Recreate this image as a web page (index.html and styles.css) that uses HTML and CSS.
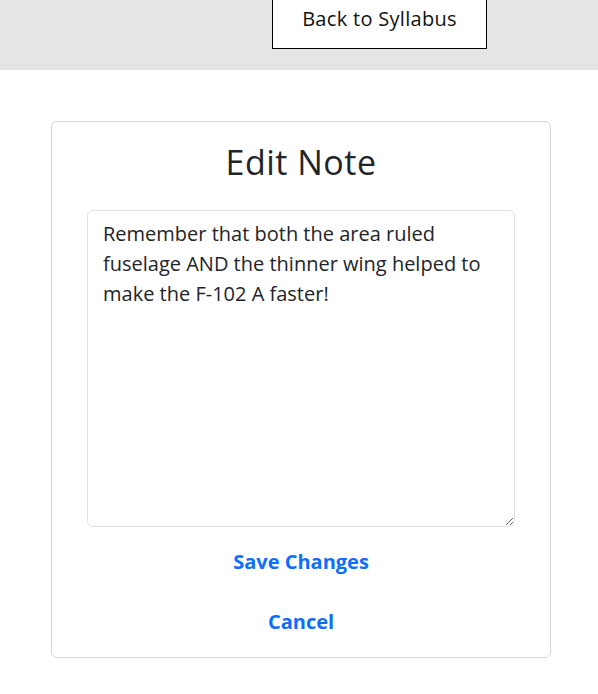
FILE: index.html
```html
<!DOCTYPE html>
<html>
<head>
<meta charset="utf-8">
<link rel="stylesheet" href="styles.css">
</head>
<body>
<header class="topbar">
  <button class="back-btn">Back to Syllabus</button>
</header>
<main class="page">
  <section class="card">
    <h1 class="title">Edit Note</h1>
    <textarea class="note">Remember that both the area ruled fuselage AND the thinner wing helped to make the F-102 A faster!</textarea>
    <button class="link-btn">Save Changes</button>
    <button class="link-btn">Cancel</button>
  </section>
</main>
</body>
</html>
```
FILE: styles.css
```css
* { box-sizing: border-box; }
html, body { margin: 0; padding: 0; background: #fff; }
body {
  font-family: "Open Sans", "Lato", sans-serif;
  color: #212529;
  overflow: hidden;
}
.topbar {
  height: 70px;
  background: #e5e5e5;
  display: flex;
  align-items: flex-start;
  padding-left: 272px;
}
.back-btn {
  margin-top: -12px;
  width: 215px;
  height: 61px;
  background: #fff;
  border: 1px solid #000;
  font-family: inherit;
  font-size: 20px;
  letter-spacing: 0.3px;
  color: #111;
  padding: 0;
}
.page {
  padding: 51px 0 0 51px;
}
.card {
  width: 500px;
  height: 537px;
  border: 1px solid #d4d4d4;
  border-radius: 6px;
  display: flex;
  flex-direction: column;
  align-items: center;
  padding: 0 35px;
}
.title {
  margin: 20px 0 0;
  font-weight: 400;
  font-size: 34px;
  letter-spacing: 0.5px;
  line-height: 40px;
  color: #212529;
}
.note {
  margin-top: 28px;
  width: 428px;
  height: 317px;
  border: 1px solid #dee2e6;
  border-radius: 6px;
  padding: 8px 15px;
  font-family: inherit;
  font-size: 20px;
  line-height: 30px;
  color: #212529;
  resize: vertical;
}
.link-btn {
  background: none;
  border: none;
  font-family: inherit;
  font-weight: 700;
  font-size: 20px;
  color: #0d6efd;
  padding: 0;
  height: 30px;
}
.note + .link-btn { margin-top: 19px; }
.link-btn + .link-btn { margin-top: 30px; }
```
